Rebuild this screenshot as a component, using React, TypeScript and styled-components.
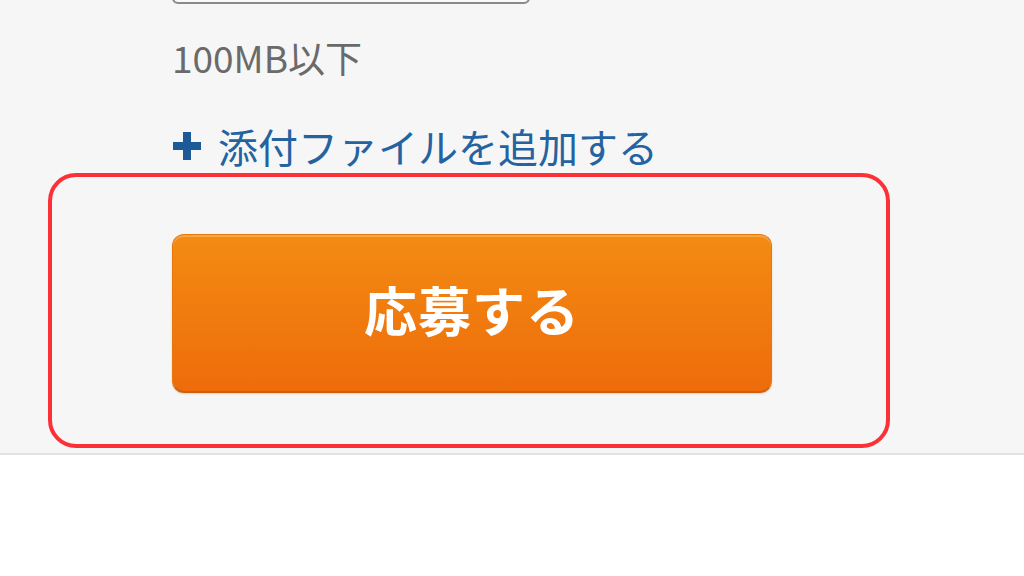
import React from "react";
import styled, { createGlobalStyle } from "styled-components";

const Global = createGlobalStyle`
  html, body { margin: 0; padding: 0; background: #ffffff; }
  body { font-family: "Noto Sans CJK JP", "Noto Sans", sans-serif; }
`;

const Page = styled.div`
  width: 1024px;
  height: 576px;
  overflow: hidden;
  background: #ffffff;
`;

const Section = styled.section`
  height: 455px;
  background: #f6f6f6;
  border-bottom: 2px solid #e2e2e2;
  padding-left: 48px;
  box-sizing: border-box;
  display: flex;
  flex-direction: column;
`;

const Indent = styled.div`
  padding-left: 124px;
  display: flex;
  flex-direction: column;
  align-items: flex-start;
`;

const FileInput = styled.div`
  width: 358px;
  height: 40px;
  margin-top: -36px;
  box-sizing: border-box;
  border: 2px solid #8a8a8a;
  border-radius: 6px;
  background: #f9f9f9;
`;

const Note = styled.p`
  margin: 30px 0 0;
  font-size: 37px;
  line-height: 46px;
  color: #6a6a6a;
`;

const AddLink = styled.a`
  margin-top: 42px;
  display: flex;
  align-items: center;
  gap: 16px;
  font-size: 40px;
  line-height: 48px;
  color: #24639f;
  text-decoration: none;
  cursor: pointer;
`;

const PlusIcon = styled.svg`
  width: 30px;
  height: 30px;
  flex: none;
`;

const Highlight = styled.div`
  margin-top: 3px;
  width: 842px;
  height: 275px;
  box-sizing: border-box;
  border: 4px solid #fb3137;
  border-radius: 28px;
  padding: 57px 0 0 120px;
`;

const ApplyButton = styled.button`
  width: 600px;
  height: 159px;
  box-sizing: border-box;
  border: 1px solid #e7780f;
  border-bottom: 2px solid #cf5f08;
  border-radius: 12px;
  background: linear-gradient(#f38b12, #ee6c0b);
  box-shadow: inset 0 2px 0 rgba(255, 190, 120, 0.5), 0 1px 2px rgba(0, 0, 0, 0.15);
  color: #ffffff;
  font-family: "Noto Sans CJK JP", "Noto Sans", sans-serif;
  font-weight: 700;
  font-size: 53px;
  letter-spacing: 1px;
  line-height: 1;
  padding: 0 0 8px;
  cursor: pointer;
`;

export default function App() {
  return (
    <Page>
      <Global />
      <Section>
        <Indent>
          <FileInput />
          <Note>100MB以下</Note>
          <AddLink>
            <PlusIcon viewBox="0 0 30 30">
              <path d="M11 1h8v10h10v8H19v10h-8V19H1v-8h10z" fill="#1b5a97" />
            </PlusIcon>
            添付ファイルを追加する
          </AddLink>
        </Indent>
        <Highlight>
          <ApplyButton>応募する</ApplyButton>
        </Highlight>
      </Section>
    </Page>
  );
}
